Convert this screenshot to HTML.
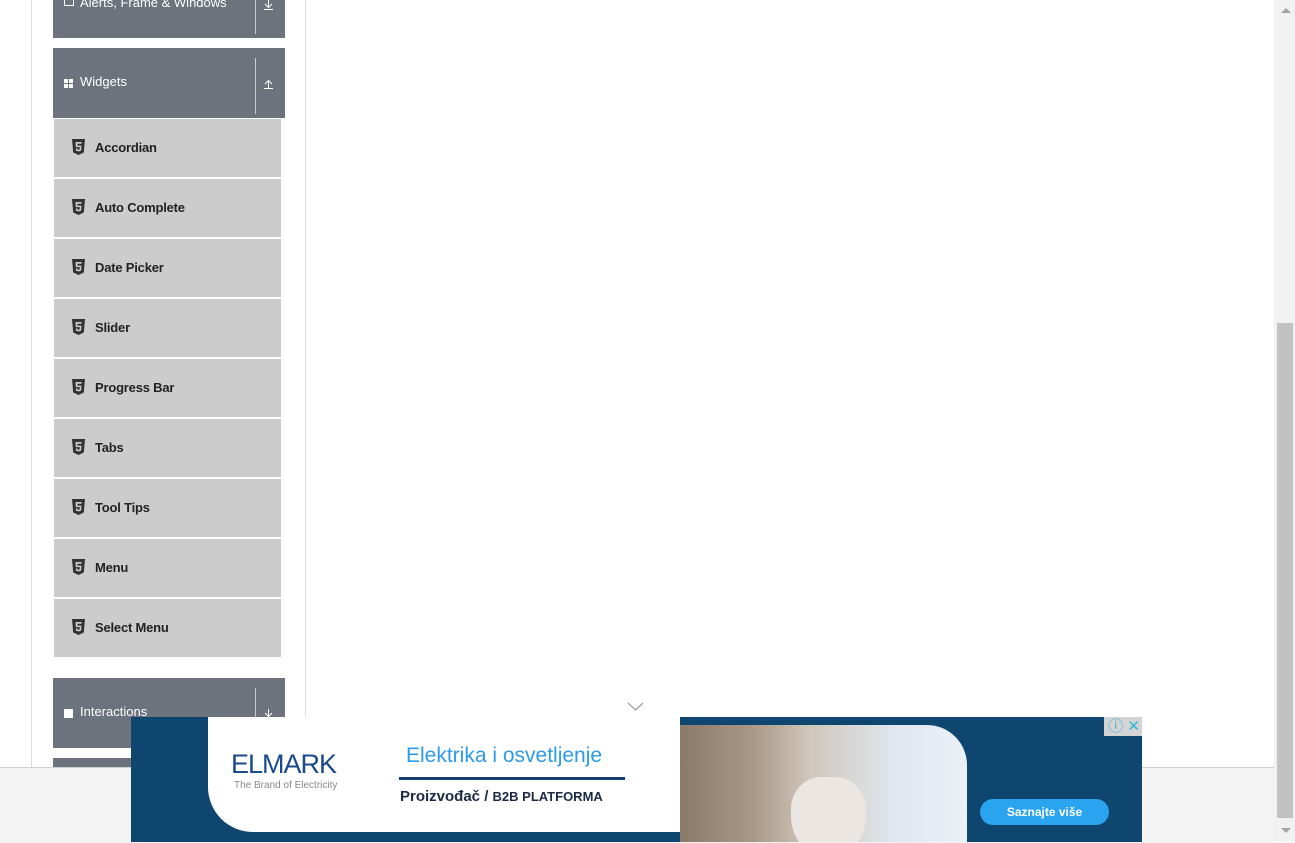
<!DOCTYPE html>
<html><head><style>
body{margin:0;width:1295px;height:842px;overflow:hidden;background:#fff;font-family:"Liberation Sans",sans-serif;position:relative}
.a{position:absolute}
.hdr{position:absolute;left:53px;width:232px;background:#6c737d;color:#fff;font-size:13px}
.hdr .sep{position:absolute;left:202px;top:10px;bottom:4px;width:1px;background:#c8ccd0}
.item{position:absolute;left:54px;width:227px;height:58px;background:#ccc;font-size:13px;font-weight:bold;color:#222}
.item span{position:absolute;left:41px;top:21px;letter-spacing:-0.2px}
.item svg{position:absolute;left:18px;top:20px}
</style></head><body>
<div class="a" style="left:31px;top:0;width:1px;height:767px;background:#ddd"></div>
<div class="a" style="left:305px;top:0;width:1px;height:767px;background:#ddd"></div>
<div class="hdr" style="top:0;height:38px"><div class="a" style="left:11px;top:-4px;width:8px;height:8px;border:1px solid #fff"></div><span class="a" style="left:27px;top:-5px">Alerts, Frame &amp; Windows</span><div class="sep" style="top:0"></div><svg class="a" style="left:210px;top:0" width="11" height="10"><path d="M5.5 0v7M2 4l3.5 3.5L9 4M1 9.5h9" stroke="#fff" fill="none"/></svg></div>
<div class="hdr" style="top:48px;height:70px"><div class="a" style="left:11px;top:31px;width:9px;height:9px;background:linear-gradient(#fff,#fff) 0 0/4px 4px no-repeat,linear-gradient(#fff,#fff) 5px 0/4px 4px no-repeat,linear-gradient(#fff,#fff) 0 5px/4px 4px no-repeat,linear-gradient(#fff,#fff) 5px 5px/4px 4px no-repeat"></div><span class="a" style="left:27px;top:26px">Widgets</span><div class="sep"></div><svg class="a" style="left:210px;top:31px" width="11" height="10"><path d="M5.5 9V2M2 5l3.5-3.5L9 5M1 9.5h9" stroke="#fff" fill="none"/></svg></div>
<div class="item" style="top:119px"><svg width="13" height="16" viewBox="0 0 13 16"><path d="M0 0h13l-1.2 13.5L6.5 16 1.2 13.5z" fill="#333"/><path d="M3.5 3h6v1.8H5.4l.1 1.8h4l-.4 5L6.5 12.5 4 11.6 3.8 9.5h1.7l.1 1 1 .4 1-.4.2-2.4H3.8z" fill="#ccc"/></svg><span>Accordian</span></div>
<div class="item" style="top:179px"><svg width="13" height="16" viewBox="0 0 13 16"><path d="M0 0h13l-1.2 13.5L6.5 16 1.2 13.5z" fill="#333"/><path d="M3.5 3h6v1.8H5.4l.1 1.8h4l-.4 5L6.5 12.5 4 11.6 3.8 9.5h1.7l.1 1 1 .4 1-.4.2-2.4H3.8z" fill="#ccc"/></svg><span>Auto Complete</span></div>
<div class="item" style="top:239px"><svg width="13" height="16" viewBox="0 0 13 16"><path d="M0 0h13l-1.2 13.5L6.5 16 1.2 13.5z" fill="#333"/><path d="M3.5 3h6v1.8H5.4l.1 1.8h4l-.4 5L6.5 12.5 4 11.6 3.8 9.5h1.7l.1 1 1 .4 1-.4.2-2.4H3.8z" fill="#ccc"/></svg><span>Date Picker</span></div>
<div class="item" style="top:299px"><svg width="13" height="16" viewBox="0 0 13 16"><path d="M0 0h13l-1.2 13.5L6.5 16 1.2 13.5z" fill="#333"/><path d="M3.5 3h6v1.8H5.4l.1 1.8h4l-.4 5L6.5 12.5 4 11.6 3.8 9.5h1.7l.1 1 1 .4 1-.4.2-2.4H3.8z" fill="#ccc"/></svg><span>Slider</span></div>
<div class="item" style="top:359px"><svg width="13" height="16" viewBox="0 0 13 16"><path d="M0 0h13l-1.2 13.5L6.5 16 1.2 13.5z" fill="#333"/><path d="M3.5 3h6v1.8H5.4l.1 1.8h4l-.4 5L6.5 12.5 4 11.6 3.8 9.5h1.7l.1 1 1 .4 1-.4.2-2.4H3.8z" fill="#ccc"/></svg><span>Progress Bar</span></div>
<div class="item" style="top:419px"><svg width="13" height="16" viewBox="0 0 13 16"><path d="M0 0h13l-1.2 13.5L6.5 16 1.2 13.5z" fill="#333"/><path d="M3.5 3h6v1.8H5.4l.1 1.8h4l-.4 5L6.5 12.5 4 11.6 3.8 9.5h1.7l.1 1 1 .4 1-.4.2-2.4H3.8z" fill="#ccc"/></svg><span>Tabs</span></div>
<div class="item" style="top:479px"><svg width="13" height="16" viewBox="0 0 13 16"><path d="M0 0h13l-1.2 13.5L6.5 16 1.2 13.5z" fill="#333"/><path d="M3.5 3h6v1.8H5.4l.1 1.8h4l-.4 5L6.5 12.5 4 11.6 3.8 9.5h1.7l.1 1 1 .4 1-.4.2-2.4H3.8z" fill="#ccc"/></svg><span>Tool Tips</span></div>
<div class="item" style="top:539px"><svg width="13" height="16" viewBox="0 0 13 16"><path d="M0 0h13l-1.2 13.5L6.5 16 1.2 13.5z" fill="#333"/><path d="M3.5 3h6v1.8H5.4l.1 1.8h4l-.4 5L6.5 12.5 4 11.6 3.8 9.5h1.7l.1 1 1 .4 1-.4.2-2.4H3.8z" fill="#ccc"/></svg><span>Menu</span></div>
<div class="item" style="top:599px"><svg width="13" height="16" viewBox="0 0 13 16"><path d="M0 0h13l-1.2 13.5L6.5 16 1.2 13.5z" fill="#333"/><path d="M3.5 3h6v1.8H5.4l.1 1.8h4l-.4 5L6.5 12.5 4 11.6 3.8 9.5h1.7l.1 1 1 .4 1-.4.2-2.4H3.8z" fill="#ccc"/></svg><span>Select Menu</span></div>
<div class="hdr" style="top:678px;height:70px"><div class="a" style="left:11px;top:31px;width:9px;height:9px;background:#fff"></div><span class="a" style="left:27px;top:26px">Interactions</span><div class="sep"></div><svg class="a" style="left:210px;top:31px" width="11" height="10"><path d="M5.5 0v7M2 4l3.5 3.5L9 4M1 9.5h9" stroke="#fff" fill="none"/></svg></div>
<div class="hdr" style="top:758px;height:84px"></div>
<div class="a" style="left:0;top:767px;width:1274px;height:75px;background:#f3f3f3;border-top:1px solid #d0d0d0"></div>
<svg class="a" style="left:627px;top:702px" width="17" height="10"><path d="M1 1l7.5 7L16 1" stroke="#888" fill="none"/></svg>
<div class="a" style="left:1274px;top:0;width:21px;height:842px;background:#f1f1f1"></div>
<div class="a" style="left:1277px;top:323px;width:16px;height:495px;background:#c1c1c1"></div>
<div class="a" style="left:1281px;top:8px;width:0;height:0;border:5px solid transparent;border-bottom-color:#a3a3a3;border-top:0"></div>
<div class="a" style="left:1281px;top:828px;width:0;height:0;border:5px solid transparent;border-top-color:#a3a3a3;border-bottom:0"></div>
<div class="a" style="left:131px;top:717px;width:1011px;height:125px;background:#0f4670;overflow:hidden">
 <div class="a" style="left:549px;top:8px;width:287px;height:130px;border-top-right-radius:40px;background:linear-gradient(90deg,#8a7a6a 0,#a89886 25%,#cfc6bb 45%,#dfe7ef 75%,#eaf0f6 100%)"></div>
 <div class="a" style="left:549px;top:0;width:120px;height:8px;background:#0f4670"></div>
 <div class="a" style="left:77px;top:0;width:472px;height:115px;background:#fff;border-bottom-left-radius:45px"></div>
 <div class="a" style="left:100px;top:32px;font-size:27px;color:#1a4a8c;letter-spacing:-1px">ELMARK</div>
 <div class="a" style="left:103px;top:63px;font-size:10px;color:#888">The Brand of Electricity</div>
 <div class="a" style="left:275px;top:27px;font-size:21px;color:#2c9be8">Elektrika i osvetljenje</div>
 <div class="a" style="left:268px;top:60px;width:226px;height:3px;background:#173f6e"></div>
 <div class="a" style="left:269px;top:71px;font-size:15px;font-weight:bold;color:#1c2a45">Proizvođač / <span style="font-size:13px">B2B PLATFORMA</span></div>
 <div class="a" style="left:660px;top:60px;width:75px;height:80px;border-radius:40% 40% 50% 50%;background:#ece6e2"></div>
 <div class="a" style="left:849px;top:82px;width:129px;height:26px;border-radius:13px;background:#2aa4ee;color:#fff;font-size:12px;font-weight:bold;text-align:center;line-height:26px">Saznajte više</div>
 <div class="a" style="left:973px;top:0;width:38px;height:19px;background:#d4d4d4;color:#2bb6d8;font-size:15px;line-height:19px">&nbsp;ⓘ&nbsp;✕</div>
</div>
</body></html>
